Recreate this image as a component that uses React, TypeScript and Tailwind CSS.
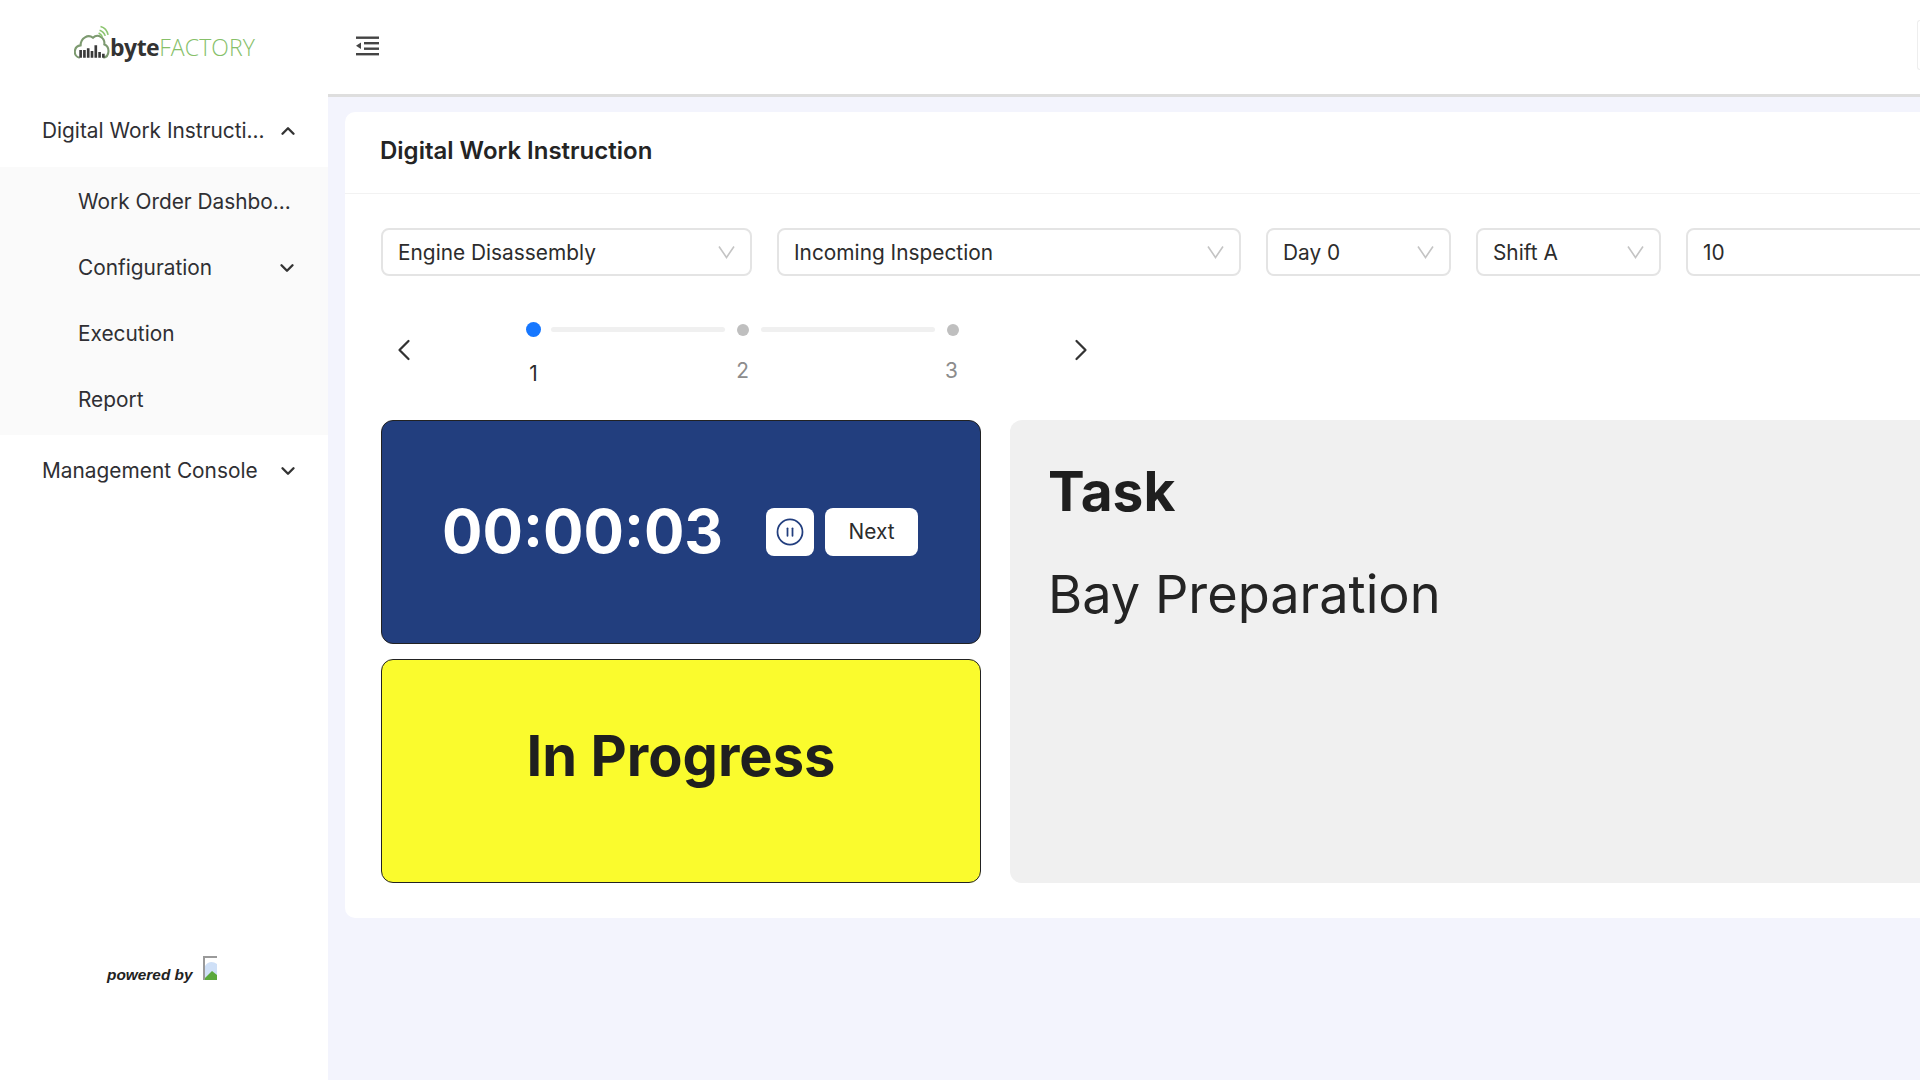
import { ChevronDown, ChevronLeft, ChevronRight, ChevronUp, CirclePause } from "lucide-react";

const font = "font-['Inter',sans-serif]";

function Logo() {
  return (
    <div className="flex items-end">
      <svg width="36" height="35" viewBox="0 0 38 36" fill="none" className="mb-[2px]">
        <path d="M6 34 C-1 33 -1 22 7 21 C7 13 15 9 20 13 C25 8 33 13 32 20 C38 22 38 33 31 34" stroke="#7d9a70" strokeWidth="2.2" />
        <path d="M28 1 C32 2 35 5 36 10 M27 5 C30 6 32 8 33 11 M26 8 C28 9 29 10 30 12" stroke="#8cc56f" strokeWidth="1.6" />
        <path d="M7 34 V26 M11 34 V26 M15 34 V24 M19 34 V27 M23 34 V21 M27 34 V28 M31 34 V30" stroke="#3a3a3a" strokeWidth="2.8" />
      </svg>
      <span className="font-['Open_Sans',sans-serif] text-[23px] leading-[30px] tracking-[-0.5px] font-bold text-[#333]">byte</span>
      <span className="font-['Open_Sans',sans-serif] text-[23px] leading-[30px] tracking-[0.1px] font-light text-[#86c069]">FACTORY</span>
    </div>
  );
}

function MenuRow(props: { label: string; icon?: "up" | "down"; sub?: boolean }) {
  return (
    <div className={`flex items-center justify-between pr-[29px] ${props.sub ? "h-[66px] pl-[78px]" : "h-[72px] pl-[42px]"}`}>
      <span className="text-[20.85px] text-[#2f2f33] whitespace-nowrap">{props.label}</span>
      {props.icon === "up" && <ChevronUp size={22} strokeWidth={2.6} className="text-[#333] shrink-0" />}
      {props.icon === "down" && <ChevronDown size={22} strokeWidth={2.6} className="text-[#333] shrink-0" />}
    </div>
  );
}

function Sidebar() {
  return (
    <aside className="w-[328px] shrink-0 bg-white flex flex-col h-full">
      <div className="h-[95px] flex items-center pl-[74px] pb-[8px]">
        <Logo />
      </div>
      <MenuRow label="Digital Work Instructi..." icon="up" />
      <div className="bg-[#fafafa] pr-[1px] pt-[2px] pb-[2px]">
        <MenuRow sub label="Work Order Dashbo..." />
        <MenuRow sub label="Configuration" icon="down" />
        <MenuRow sub label="Execution" />
        <MenuRow sub label="Report" />
      </div>
      <MenuRow label="Management Console" icon="down" />
      <div className="mt-auto mb-[97px] flex items-end pl-[107px]">
        <span className="font-['Liberation_Sans',sans-serif] italic font-bold text-[15.4px] text-[#222] leading-none mb-[1px]">powered by</span>
        <svg width="14" height="24" viewBox="0 0 14 24" className="ml-[10px] mb-[3px]">
          <rect x="0" y="0" width="14" height="24" fill="#9a9a9a" />
          <rect x="2" y="2" width="12" height="20" fill="#cfe0f7" />
          <path d="M2 10 C5 5 10 5 14 8 V2 H2 Z" fill="#ffffff" />
          <path d="M2 22 L9 15 L14 19 V24 H2 Z" fill="#5aa83c" />
        </svg>
      </div>
    </aside>
  );
}

function Select(props: { label: string; width: string }) {
  return (
    <div className={`${props.width} shrink-0 h-[48px] border-2 border-[#e4e4e4] rounded-[8px] bg-white flex items-center justify-between pl-[15px] pr-[15px]`}>
      <span className="text-[20.85px] text-[#2c2c2c] whitespace-nowrap pt-[1px]">{props.label}</span>
      <svg width="17" height="14" viewBox="0 0 17 14" fill="none">
        <path d="M1 1.5 L8.5 12.5 L16 1.5" stroke="#c4c4c4" strokeWidth="1.6" />
      </svg>
    </div>
  );
}

function Stepper() {
  return (
    <div className="flex items-start pl-[41px] pt-[46px]">
      <ChevronLeft size={36} strokeWidth={1.5} className="text-[#333] mt-[10px] shrink-0" />
      <div className="w-[627px] ml-[7px] shrink-0">
        <div className="flex items-center px-[97px]">
          <div className="w-[15px] h-[15px] rounded-full bg-[#1677ff] shrink-0" />
          <div className="flex-1 h-[5px] rounded-full bg-[#f0f0f0] ml-[10px] mr-[12px]" />
          <div className="w-[12px] h-[12px] rounded-full bg-[#bfbfbf] shrink-0" />
          <div className="flex-1 h-[5px] rounded-full bg-[#f0f0f0] mx-[12px]" />
          <div className="w-[12px] h-[12px] rounded-full bg-[#bfbfbf] shrink-0" />
        </div>
        <div className="grid grid-cols-3 text-center text-[20.85px] leading-[26px] mt-[20px]">
          <span className="text-[#2c2c2c] mt-[4px]">1</span>
          <span className="text-[#8c8c8c] mt-[1px]">2</span>
          <span className="text-[#8c8c8c] mt-[1px]">3</span>
        </div>
      </div>
      <ChevronRight size={36} strokeWidth={1.5} className="text-[#333] mt-[10px] ml-[7px] shrink-0" />
    </div>
  );
}

export default function App() {
  return (
    <div className={`${font} w-[1920px] h-[1080px] overflow-hidden flex bg-[#f3f4fd]`}>
      <Sidebar />
      <main className="flex-1 min-w-0 flex flex-col overflow-hidden">
        <header className="h-[97px] shrink-0 bg-white border-b-[3px] border-[#dedede] flex items-center justify-between pl-[28px]">
          <svg width="24" height="20" viewBox="0 0 24 20" className="mb-[2px]" fill="#444">
            <rect x="0" y="0.5" width="23" height="2.4" />
            <rect x="8" y="6" width="15" height="2.4" />
            <rect x="8" y="11.5" width="15" height="2.4" />
            <rect x="0" y="17" width="23" height="2.4" />
            <path d="M0 9.8 L5 6.5 V13 Z" />
          </svg>
          <div className="w-[3px] h-[50px] mb-[4px] rounded-l-[6px] border border-r-0 border-[#eeeeee]" />
        </header>
        <section className="mt-[15px] ml-[17px] w-[1800px] h-[806px] shrink-0 bg-white rounded-[10px]">
          <div className="h-[82px] border-b border-[#f2f2f2] flex items-center pl-[35px] pb-[3px]">
            <h1 className="text-[24px] font-semibold text-[#242424]">Digital Work Instruction</h1>
          </div>
          <div className="pt-[34px] pl-[36px]">
            <div className="flex gap-[25px]">
              <Select label="Engine Disassembly" width="w-[371px]" />
              <Select label="Incoming Inspection" width="w-[464px]" />
              <Select label="Day 0" width="w-[185px]" />
              <Select label="Shift A" width="w-[185px]" />
              <div className="w-[400px] shrink-0 h-[48px] border-2 border-[#e4e4e4] rounded-[8px] flex items-center pl-[15px] pt-[1px] text-[20.85px] text-[#2c2c2c]">10</div>
            </div>
          </div>
          <Stepper />
          <div className="flex gap-[29px] pl-[36px] mt-[33px]">
            <div className="w-[600px] shrink-0 flex flex-col gap-[15px]">
              <div className="h-[224px] rounded-[12px] bg-[#223e7e] border border-[#222] flex items-center pl-[60px]">
                <span className="w-[280px] mb-[2px] text-[60px] leading-none font-bold text-white whitespace-nowrap">00:00:03</span>
                <div className="flex gap-[11px] ml-[44px] shrink-0">
                  <button className="w-[48px] h-[48px] rounded-[8px] bg-white flex items-center justify-center">
                    <CirclePause size={30} strokeWidth={1.4} className="text-[#223e7e]" />
                  </button>
                  <button className="w-[93px] h-[48px] rounded-[8px] bg-white text-[20.85px] text-[#2c2c2c]">Next</button>
                </div>
              </div>
              <div className="h-[224px] rounded-[12px] bg-[#fafb2d] border border-[#222] flex justify-center pt-[62px]">
                <span className="text-[56px] leading-[68px] font-bold text-[#1f1f1f]">In Progress</span>
              </div>
            </div>
            <div className="w-[1000px] shrink-0 h-[463px] rounded-[12px] bg-[#f0f0f0] pl-[38px] pt-[37px]">
              <h2 className="text-[55px] leading-[68px] font-bold text-[#1f1f1f]">Task</h2>
              <p className="text-[52.3px] leading-[66px] mt-[36px] text-[#242424]">Bay Preparation</p>
            </div>
          </div>
        </section>
      </main>
    </div>
  );
}
